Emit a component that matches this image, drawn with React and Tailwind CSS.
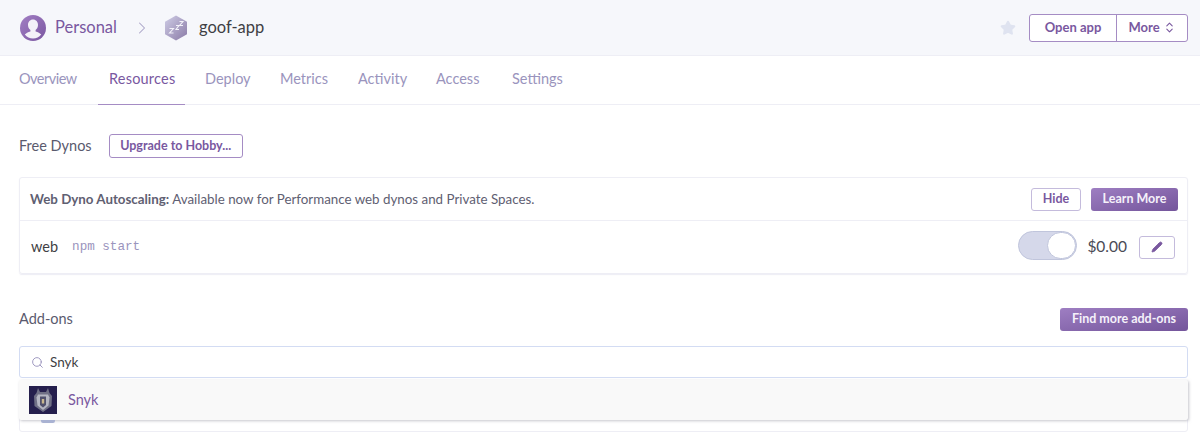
import React from 'react'
import { Search, ChevronRight, ChevronsUpDown, Star, Pencil } from 'lucide-react'

const font = '[font-family:Lato,"Noto_Sans",sans-serif]'

function Avatar() {
  return (
    <svg width="26" height="26" viewBox="0 0 26 26" className="shrink-0">
      <defs>
        <linearGradient id="av" x1="0" y1="0" x2="1" y2="1">
          <stop offset="0" stopColor="#a27fc4" />
          <stop offset="1" stopColor="#7a56a0" />
        </linearGradient>
      </defs>
      <circle cx="13" cy="13" r="13" fill="url(#av)" />
      <path d="M13 4.500c-3 0-5 2.400-5 5.500 0 2.200 1 4 2.400 5v1.400c-2.300.7-4.600 1.700-5.600 3.200A10.600 10.600 0 0 0 13 23.600a10.600 10.600 0 0 0 8.200-4c-1-1.500-3.300-2.500-5.600-3.200V15c1.400-1 2.400-2.800 2.400-5 0-3.100-2-5.500-5-5.500z" fill="#f4f1f8" />
    </svg>
  )
}

function AppHex() {
  return (
    <svg width="24" height="26" viewBox="0 0 24 26" className="shrink-0">
      <defs>
        <linearGradient id="hx" x1="0" y1="0" x2="1" y2="1">
          <stop offset="0" stopColor="#cfcde6" />
          <stop offset="1" stopColor="#8a7aa6" />
        </linearGradient>
      </defs>
      <path d="M12 0.500 23 6.700v12.600L12 25.500 1 19.300V6.700z" fill="url(#hx)" />
      <path d="M5.500 13.500h4l-4 4.500h4M12 10.500h3l-3 4h3M15.500 6.500h3.500l-3.500 4h3.500" fill="none" stroke="#f3f2f9" strokeWidth="1.100" />
    </svg>
  )
}

function SnykLogo() {
  return (
    <svg width="28" height="28" viewBox="0 0 28 28" className="shrink-0">
      <rect width="28" height="28" fill="#251f4d" />
      <path d="M9 2l2 4h6l2-4 1.500 5L23 10l-.5 10-8.500 6-8.500-6L5 10l2.500-3z" fill="#6f6f85" />
      <path d="M9 8.500h10l1.500 3-1 8L14 24l-5.500-4.500-1-8z" fill="#b5b6c2" />
      <path d="M11 10.500h6v8.500l-3 2.500-3-2.500z" fill="#50506c" />
      <path d="M12.800 13h2.400v4.500h-2.400z" fill="#c9b78e" />
    </svg>
  )
}

function Tab({ children, active, width }) {
  return (
    <a className={`${width} relative h-[48px] pb-[3px] flex items-center text-[14.500px] ${active ? 'text-[#79589f]' : 'text-[#9a94bd]'}`}>
      {children}
      {active && <span className="absolute -left-[11px] w-[87px] h-px bottom-[-1px] bg-[#a58cc4]"></span>}
    </a>
  )
}

export default function App() {
  return (
    <div className={`${font} w-[1200px] h-[443px] overflow-hidden bg-white text-[#3f3f44]`}>
      <header className="h-[56px] bg-[#f6f7fb] border-b border-[#eeeef5] flex items-center pl-[20px] pr-[12px]">
        <Avatar />
        <span className="ml-[9px] text-[16.500px] text-[#79589f]">Personal</span>
        <ChevronRight size={20} strokeWidth={1.250} className="ml-[15px] text-[#a9a3c6]" />
        <span className="ml-[12px]"><AppHex /></span>
        <span className="ml-[11px] text-[16.500px] text-[#3f3f44]">goof-app</span>
        <Star size={16} fill="#dfe3f0" stroke="#dfe3f0" className="ml-auto mr-[13px]" />
        <div className="flex h-[28px] w-[159px] bg-white border border-[#a58cc4] rounded-[3px] text-[13px] font-bold text-[#79589f]">
          <span className="w-[87px] flex items-center justify-center border-r border-[#a58cc4]">Open app</span>
          <span className="flex-1 flex items-center justify-center gap-[3px]">More <ChevronsUpDown size={13} strokeWidth={2} /></span>
        </div>
      </header>

      <nav className="h-[49px] border-b border-[#eeeef5] flex pl-[19px]">
        <Tab width="w-[90px]"><span className="tracking-[-0.5px]">Overview</span></Tab>
        <Tab width="w-[96px]" active><span className="tracking-[0.2px]">Resources</span></Tab>
        <Tab width="w-[75px]">Deploy</Tab>
        <Tab width="w-[78px]">Metrics</Tab>
        <Tab width="w-[78px]">Activity</Tab>
        <Tab width="w-[76px]">Access</Tab>
        <Tab width="w-[60px]">Settings</Tab>
      </nav>

      <main className="pl-[19px] pr-[12px] pt-[29px]">
        <div className="flex items-center h-[24px]">
          <span className="text-[14.500px] text-[#5a5a6e]">Free Dynos</span>
          <button className="ml-[17px] w-[134px] h-[24px] bg-white border border-[#a58cc4] rounded-[3px] text-[12.500px] font-bold text-[#79589f]">Upgrade to Hobby...</button>
        </div>

        <section className="mt-[19px] h-[97px] border border-[#eeeef5] rounded-[3px] shadow-[0_1px_1px_rgba(220,220,235,0.5)]">
          <div className="h-[43px] border-b border-[#eeeef5] flex items-center pl-[10px] pr-[9px] text-[13.350px] text-[#5f6072]">
            <span><b className="font-bold">Web Dyno Autoscaling:</b> Available now for Performance web dynos and Private Spaces.</span>
            <button className="ml-auto w-[50px] h-[23px] bg-white border border-[#c4bbdc] rounded-[3px] text-[12.500px] font-bold text-[#79589f]">Hide</button>
            <button className="ml-[10px] w-[87px] h-[23px] rounded-[3px] bg-gradient-to-br from-[#9e7ec2] to-[#74559b] text-[12.500px] font-bold text-[#f5f1fa]">Learn More</button>
          </div>
          <div className="h-[52px] flex items-center pl-[11px] pr-[12px]">
            <span className="text-[14.500px] text-[#3f3f44]">web</span>
            <span className="ml-[14px] text-[12.600px] text-[#9a94bd] [font-family:'Liberation_Mono',monospace]">npm start</span>
            <div className="ml-auto -mt-[4px] w-[59px] h-[29px] rounded-full border border-[#c0c5dc] bg-[#d5d8ea] bg-[radial-gradient(#bcc1da_0.6px,transparent_0.6px)] bg-[length:2px_2px] flex justify-end">
              <span className="w-[29px] h-[27px] rounded-full bg-white border border-[#c0c5dc]"></span>
            </div>
            <span className="ml-[10px] text-[15.500px] text-[#4a4a55]">$0.00</span>
            <button className="ml-[12px] w-[36px] h-[23px] bg-white border border-[#c4bbdc] rounded-[3px] flex items-center justify-center text-[#79589f]">
              <Pencil size={12} fill="#79589f" strokeWidth={1.500} />
            </button>
          </div>
        </section>

        <div className="mt-[33px] flex items-center justify-between h-[24px]">
          <span className="text-[14.500px] text-[#5a5a6e]">Add-ons</span>
          <button className="w-[128px] h-[23px] rounded-[3px] bg-gradient-to-br from-[#9e7ec2] to-[#74559b] text-[12.500px] font-bold text-[#f5f1fa]">Find more add-ons</button>
        </div>

        <div className="relative mt-[15px]">
          <div className="h-[32px] border border-[#d3dcf3] rounded-[3px] flex items-center pl-[11px] bg-white">
            <Search size={13} strokeWidth={1.750} className="text-[#9a94bd]" />
            <span className="ml-[6px] text-[13.500px] text-[#3f3f44]">Snyk</span>
          </div>
          <div className="mt-[3px] h-[51px] border border-[#eeeef5] rounded-[3px]"></div>
          <div className="absolute left-0 right-0 top-[34px] h-[40px] bg-[#f9f9f9] rounded-[2px] shadow-[1px_1px_3px_rgba(150,150,160,0.55)] flex items-center pl-[10px]">
            <SnykLogo />
            <span className="ml-[11px] text-[14.500px] text-[#79589f]">Snyk</span>
          </div>
          <div className="absolute left-[22px] top-[74px] w-[14px] h-[3px] rounded-b-[2px] bg-[#a9b2d2]"></div>
        </div>
      </main>
    </div>
  )
}
